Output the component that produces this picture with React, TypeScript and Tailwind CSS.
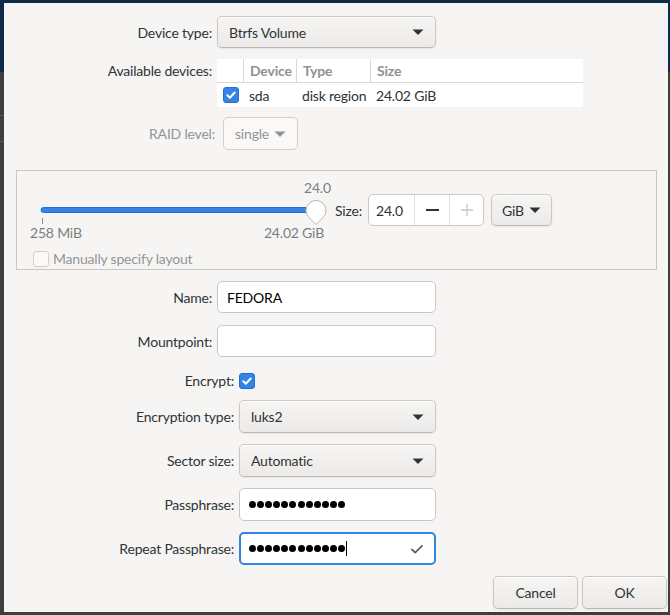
import React from "react";

// Shared widget styles (Adwaita-ish)
const btn =
  "bg-[linear-gradient(to_top,#edebe9_2px,#f6f5f4)] border border-[#cdc7c2] border-b-[#bfb8b1] rounded-[5px] shadow-[inset_0_1px_white,0_1px_2px_rgba(0,0,0,0.07)]";
const entry = "bg-white border border-[#cdc7c2] rounded-[5px]";

const Arrow = ({ color = "#2e3436" }: { color?: string }) => (
  <svg width="16" height="16" viewBox="0 0 16 16">
    <path d="M2.5 5.5h11l-5.5 5.5z" fill={color} />
  </svg>
);

const CheckBox = ({ checked = true, disabled = false }: { checked?: boolean; disabled?: boolean }) =>
  checked ? (
    <span className="flex h-4 w-4 shrink-0 items-center justify-center rounded-[3px] border border-[#1c71d8] bg-[#3584e4]">
      <svg width="12" height="12" viewBox="0 0 12 12">
        <path
          d="M2.3 6.3l2.5 2.4 4.9-5.2"
          fill="none"
          stroke="white"
          strokeWidth="2"
          strokeLinecap="round"
          strokeLinejoin="round"
        />
      </svg>
    </span>
  ) : (
    <span
      className={`h-4 w-4 shrink-0 rounded-[3px] border ${
        disabled ? "border-[#d5d0cc] bg-[#faf9f8]" : "border-[#cdc7c2] bg-white"
      }`}
    />
  );

const Combo = ({ text, w, h = 33 }: { text: string; w: string; h?: number }) => (
  <div
    className={`${btn} ${w} ${h === 32 ? "h-[32px]" : "h-[33px]"} flex items-center justify-between pl-[11px] pr-[9px]`}
  >
    <span>{text}</span>
    <Arrow />
  </div>
);

const Dots = ({ n }: { n: number }) => (
  <div className="flex gap-[1.1px]">
    {Array.from({ length: n }).map((_, i) => (
      <span key={i} className="h-[7px] w-[7px] rounded-full bg-black" />
    ))}
  </div>
);

// label + control row, label column fixed so controls line up
const Row = ({
  label,
  lw,
  gap = "gap-[5px]",
  mt,
  children,
  muted = false,
}: {
  label: string;
  lw: string;
  gap?: string;
  mt: string;
  children: React.ReactNode;
  muted?: boolean;
}) => (
  <div className={`flex items-center ${gap} ${mt}`}>
    <div className={`${lw} shrink-0 text-right ${muted ? "text-[#929595]" : ""}`}>{label}</div>
    {children}
  </div>
);

const SizeSlider = () => (
  <div className="flex w-[300px] flex-col text-[#7b7e7f]">
    <div className="h-[16px] pl-[274px] leading-[16px]">24.0</div>
    <svg width="300" height="29" viewBox="0 0 300 29">
      <rect x="11" y="11.5" width="276" height="5" rx="2.5" fill="#3584e4" stroke="#1c71d8" strokeWidth="1" />
      <line x1="12.5" y1="22" x2="12.5" y2="28" stroke="#8b8e8f" strokeWidth="1" />
      <path
        d="M286 28.5 L279 21.6 A10 10 0 1 1 293 21.6 Z"
        fill="#ffffff"
        stroke="#bfb8b1"
        strokeWidth="1"
      />
    </svg>
    <div className="flex h-[16px] justify-between pr-[6px] leading-[16px]">
      <span>258 MiB</span>
      <span>24.02 GiB</span>
    </div>
  </div>
);

const SpinBox = () => (
  <div className={`${entry} flex h-[32px] w-[116px] overflow-hidden`}>
    <div className="flex w-[45px] items-center pl-[7px]">24.0</div>
    <div className="flex w-[35px] items-center justify-center border-l border-[#e3dfdb]">
      <span className="h-[2px] w-[13px] bg-[#2e3436]" />
    </div>
    <div className="flex flex-1 items-center justify-center border-l border-[#e3dfdb]">
      <svg width="16" height="16" viewBox="0 0 16 16">
        <path d="M8 2v12M2 8h12" stroke="#c9c6c2" strokeWidth="1.3" />
      </svg>
    </div>
  </div>
);

export default function App() {
  return (
    <div className="relative h-[615px] w-[670px] overflow-hidden bg-[linear-gradient(#0f2b4a_0_72px,#3e3e3e_72px)] pl-[4px] pt-[3px] font-['Lato','Noto_Sans',sans-serif] text-[14px] leading-[17px] tracking-[-0.2px] text-[#2e3436]">
      {/* bits of the window behind */}
      <div className="absolute left-0 top-[115px] h-px w-[4px] bg-[#5a5a5a]" />
      <div className="absolute left-0 top-[141px] h-px w-[4px] bg-[#5a5a5a]" />

      {/* Dialog */}
      <div className="flex h-[609px] w-[664px] flex-col bg-[#f6f5f4]">
        {/* Device type */}
        <Row label="Device type:" lw="w-[208px]" mt="mt-[13px]">
          <Combo text="Btrfs Volume" w="w-[219px]" h={32} />
        </Row>

        {/* Available devices */}
        <div className="mt-[11px] flex items-start gap-[5px]">
          <div className="w-[208px] shrink-0 pt-[3px] text-right">Available devices:</div>
          <div className="w-[366px] bg-white">
            <div className="flex h-[24px] border-b border-[#dcd8d4] font-bold text-[#8f9293]">
              <div className="w-[27px] border-r border-[#dcd8d4]" />
              <div className="flex w-[53px] items-center border-r border-[#dcd8d4] pl-[6px]">Device</div>
              <div className="flex w-[74px] items-center border-r border-[#dcd8d4] pl-[6px]">Type</div>
              <div className="flex flex-1 items-center pl-[6px]">Size</div>
            </div>
            <div className="flex h-[24px] items-center">
              <div className="flex w-[27px] justify-center pl-[1px]">
                <CheckBox />
              </div>
              <div className="w-[53px] pl-[5px]">sda</div>
              <div className="w-[74px] pl-[5px]">disk region</div>
              <div className="flex-1 pl-[5px]">24.02 GiB</div>
            </div>
          </div>
        </div>

        {/* RAID level (disabled) */}
        <Row label="RAID level:" lw="w-[211px]" gap="gap-[8px]" mt="mt-[10px]" muted>
          <div className="flex h-[33px] w-[75px] items-center justify-between rounded-[5px] border border-[#d5d0cc] bg-[#faf9f8] pl-[11px] pr-[9px] text-[#929595]">
            <span>single</span>
            <Arrow color="#929595" />
          </div>
        </Row>

        {/* Size frame */}
        <div className="ml-[12px] mt-[20px] h-[100px] w-[641px] border border-[#cdc7c2] pl-[13px] pt-[9px]">
          <div className="flex items-start">
            <SizeSlider />
            <div className="ml-[5px] mt-[14px] flex h-[32px] items-center">
              <span className="w-[33px]">Size:</span>
              <SpinBox />
              <div className={`${btn} ml-[7px] flex h-[32px] w-[61px] items-center justify-center gap-[3px] pl-[2px]`}>
                <span>GiB</span>
                <Arrow />
              </div>
            </div>
          </div>
          <div className="ml-[3px] mt-[9px] flex items-center gap-[4px] text-[#929595]">
            <CheckBox checked={false} disabled />
            <span>Manually specify layout</span>
          </div>
        </div>

        {/* Name / Mountpoint */}
        <Row label="Name:" lw="w-[208px]" mt="mt-[11px]">
          <div className={`${entry} flex h-[32px] w-[219px] items-center pl-[9px] text-[#000]`}>FEDORA</div>
        </Row>
        <Row label="Mountpoint:" lw="w-[208px]" mt="mt-[12px]">
          <div className={`${entry} h-[32px] w-[219px]`} />
        </Row>

        {/* Encryption */}
        <Row label="Encrypt:" lw="w-[230px]" mt="mt-[15px]">
          <CheckBox />
        </Row>
        <Row label="Encryption type:" lw="w-[230px]" mt="mt-[11px]">
          <Combo text="luks2" w="w-[197px]" />
        </Row>
        <Row label="Sector size:" lw="w-[230px]" mt="mt-[11px]">
          <Combo text="Automatic" w="w-[197px]" />
        </Row>
        <Row label="Passphrase:" lw="w-[230px]" mt="mt-[11px]">
          <div className={`${entry} flex h-[33px] w-[197px] items-center pl-[9px]`}>
            <Dots n={12} />
          </div>
        </Row>
        <Row label="Repeat Passphrase:" lw="w-[230px]" mt="mt-[11px]">
          <div className="flex h-[33px] w-[197px] items-center justify-between rounded-[5px] border-2 border-[#3584e4] bg-white pl-[8px] pr-[9px]">
            <div className="flex items-center gap-[1px]">
              <Dots n={12} />
              <span className="h-[15px] w-px bg-black" />
            </div>
            <svg width="16" height="16" viewBox="0 0 16 16">
              <path
                d="M3 8.5l3.2 3.2L13 4.8"
                fill="none"
                stroke="#5e6263"
                strokeWidth="1.8"
                strokeLinecap="round"
                strokeLinejoin="round"
              />
            </svg>
          </div>
        </Row>

        {/* Buttons */}
        <div className="mt-[11px] flex justify-end gap-[4px] pr-[1px]">
          <button className={`${btn} h-[33px] w-[85px]`}>Cancel</button>
          <button className={`${btn} h-[33px] w-[85px]`}>OK</button>
        </div>
      </div>
    </div>
  );
}
